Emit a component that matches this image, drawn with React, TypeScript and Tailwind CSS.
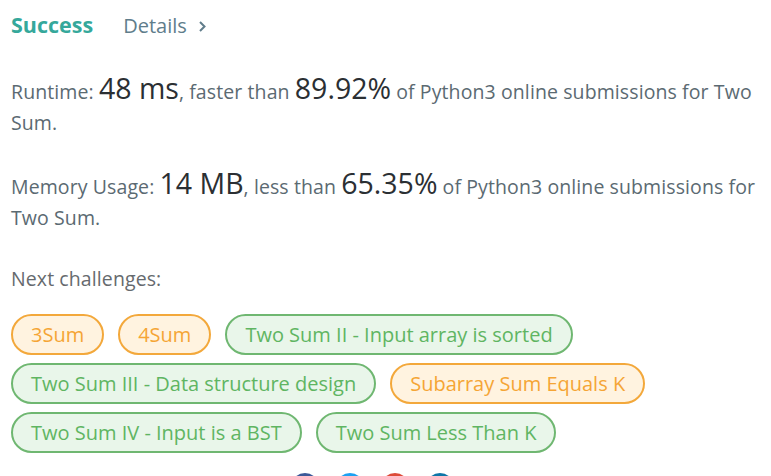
import React from "react";

const chips: { label: string; kind: "o" | "g" }[][] = [
  [
    { label: "3Sum", kind: "o" },
    { label: "4Sum", kind: "o" },
    { label: "Two Sum II - Input array is sorted", kind: "g" },
  ],
  [
    { label: "Two Sum III - Data structure design", kind: "g" },
    { label: "Subarray Sum Equals K", kind: "o" },
  ],
  [
    { label: "Two Sum IV - Input is a BST", kind: "g" },
    { label: "Two Sum Less Than K", kind: "g" },
  ],
];

function Chip({ label, kind }: { label: string; kind: "o" | "g" }) {
  return (
    <span
      className={
        kind === "o"
          ? "flex h-[41px] items-center whitespace-nowrap rounded-full border-2 border-[#f3a83b] bg-[#fff3e0] px-[18px] text-[20px] text-[#f5a535]"
          : "flex h-[41px] items-center whitespace-nowrap rounded-full border-2 border-[#6fb771] bg-[#e9f6ea] px-[18px] text-[20px] text-[#5fb562]"
      }
    >
      {label}
    </span>
  );
}

export default function App() {
  return (
    <div
      className="h-[476px] w-[771px] overflow-hidden bg-white pl-[11px]"
      style={{ fontFamily: '"Open Sans", "Noto Sans", sans-serif' }}
    >
      <div className="flex items-baseline pt-[11px] leading-[28px]">
        <span className="text-[21.5px] font-bold text-[#35a89b]">Success</span>
        <span className="ml-[30px] flex items-center text-[20px] text-[#607d8b]">
          Details
          <svg
            className="ml-[11px]"
            width="9"
            height="13"
            viewBox="0 0 9 13"
            fill="none"
            stroke="#607d8b"
            strokeWidth="2"
          >
            <path d="M2 2l4.5 4.5L2 11" />
          </svg>
        </span>
      </div>

      <div className="mt-[33px] flex flex-col gap-[30px] text-[19.5px] leading-[31px] tracking-[0.1px] text-[#5b6a72]">
        <p className="whitespace-nowrap">
          Runtime: <span className="text-[28.5px] tracking-normal text-[#2b2f33]">48 ms</span>, faster than{" "}
          <span className="text-[28.5px] tracking-normal text-[#2b2f33]">89.92%</span> of Python3 online submissions for Two
          <br />
          Sum.
        </p>
        <p className="whitespace-nowrap">
          Memory Usage: <span className="text-[28.5px] tracking-normal text-[#2b2f33]">14 MB</span>, less than{" "}
          <span className="text-[28.5px] tracking-normal text-[#2b2f33]">65.35%</span> of Python3 online submissions for
          <br />
          Two Sum.
        </p>
        <p className="text-[#666a6e]">Next challenges:</p>
      </div>

      <div className="mt-[20px] flex flex-col gap-[8px]">
        {chips.map((row, i) => (
          <div key={i} className="flex gap-[14px]">
            {row.map((c) => (
              <Chip key={c.label} label={c.label} kind={c.kind} />
            ))}
          </div>
        ))}
      </div>

      <div className="ml-[280px] mt-[20px] flex gap-[17px]">
        <span className="h-[28px] w-[28px] rounded-full bg-[#3b5998]" />
        <span className="h-[28px] w-[28px] rounded-full bg-[#1da1f2]" />
        <span className="h-[28px] w-[28px] rounded-full bg-[#dd4b39]" />
        <span className="h-[28px] w-[28px] rounded-full bg-[#0e76a8]" />
      </div>
    </div>
  );
}
